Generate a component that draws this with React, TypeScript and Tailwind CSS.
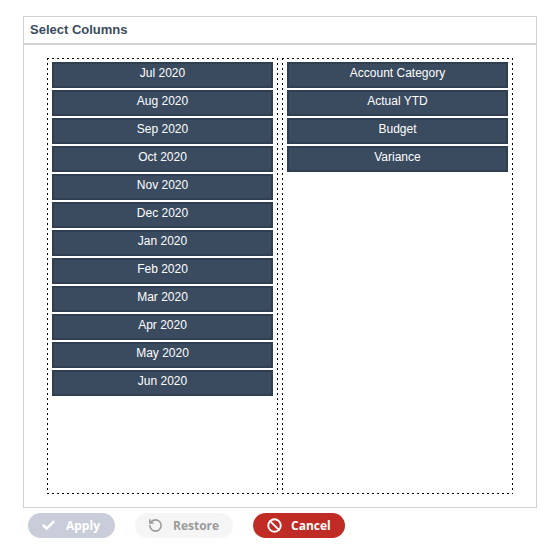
import { Check, Ban, RotateCcw } from "lucide-react";

const left = ["Jul 2020","Aug 2020","Sep 2020","Oct 2020","Nov 2020","Dec 2020","Jan 2020","Feb 2020","Mar 2020","Apr 2020","May 2020","Jun 2020"];
const right = ["Account Category","Actual YTD","Budget","Variance"];

function Column({ items }: { items: string[] }) {
  return (
    <div className="w-[231px] h-[436px] bg-no-repeat bg-[repeating-linear-gradient(90deg,#000_0_2px,transparent_2px_5px),repeating-linear-gradient(90deg,#000_0_2px,transparent_2px_5px),repeating-linear-gradient(180deg,#000_0_2px,transparent_2px_5px),repeating-linear-gradient(180deg,#000_0_2px,transparent_2px_5px)] [background-size:100%_1px,100%_1px,1px_100%,1px_100%] [background-position:0_0,0_100%,0_0,100%_0] pt-[4px] pl-[5px] flex flex-col gap-[2px]">
      {items.map((t) => (
        <div key={t} className="h-[26px] w-[221px] shrink-0 bg-[#3a4b5f] border-2 border-[#2f3e50] text-white text-[12px] leading-[19px] text-center font-['Liberation_Sans',sans-serif]">
          {t}
        </div>
      ))}
    </div>
  );
}

export default function App() {
  return (
    <div className="w-[548px] h-[549px] bg-white pt-[16px] pl-[23px] font-['Open_Sans',sans-serif]">
      <div className="w-[514px] h-[492px] border border-[#d2d2d2]">
        <div className="h-[28px] border-b-2 border-[#d2d2d2] pl-[6px] text-[13px] leading-[26px] font-bold text-[#3a4b5f] font-['Liberation_Sans',sans-serif]">
          Select Columns
        </div>
        <div className="flex gap-[4px] pl-[23px] pt-[13px]">
          <Column items={left} />
          <Column items={right} />
        </div>
      </div>
      <div className="flex ml-[5px] mt-[5px] gap-[20px] text-[12px] font-bold">
        <div className="w-[87px] h-[25px] rounded-full bg-[#c9ccd9] text-white flex items-center pl-[13px] gap-[10px]">
          <Check size={15} strokeWidth={4} />
          <span>Apply</span>
        </div>
        <div className="w-[98px] h-[25px] rounded-full bg-[#f5f5f5] text-[#9a9a9a] flex items-center pl-[13px] gap-[10px]">
          <RotateCcw size={15} strokeWidth={2.5} />
          <span>Restore</span>
        </div>
        <div className="w-[92px] h-[25px] rounded-full bg-[#c02b25] text-white flex items-center pl-[14px] gap-[9px]">
          <Ban size={15} strokeWidth={3} />
          <span>Cancel</span>
        </div>
      </div>
    </div>
  );
}
